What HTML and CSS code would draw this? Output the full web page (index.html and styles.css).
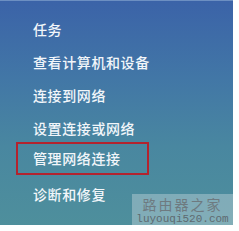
FILE: index.html
```html
<!DOCTYPE html>
<html lang="zh">
<head>
<meta charset="utf-8">
<link rel="stylesheet" href="styles.css">
</head>
<body>
<div class="panel">
  <ul class="tasks">
    <li class="title">任务</li>
    <li>查看计算机和设备</li>
    <li>连接到网络</li>
    <li>设置连接或网络</li>
    <li class="hl">管理网络连接</li>
    <li>诊断和修复</li>
  </ul>
  <div class="wm">
    <div class="wm-cn">路由器之家</div>
    <div class="wm-en">luyouqi520.com</div>
  </div>
</div>
</body>
</html>
```
FILE: styles.css
```css
html, body { margin: 0; padding: 0; background: #fff; }
.panel {
  position: relative;
  width: 233px;
  height: 225px;
  background: linear-gradient(to bottom, #3b63a8 0%, #4277a6 35%, #4987a0 65%, #4e8f9c 100%);
  border-top: 1px solid #6c8fc2;
  box-sizing: border-box;
  overflow: hidden;
}
.tasks {
  list-style: none;
  margin: 0;
  padding: 12px 0 0 33px;
  display: flex;
  flex-direction: column;
  align-items: flex-start;
}
.tasks li {
  height: 33px;
  line-height: 33px;
  font-family: "Noto Sans CJK SC", sans-serif;
  font-size: 14px;
  font-weight: 500;
  letter-spacing: 0.6px;
  color: #f2f6fa;
  white-space: nowrap;
}
.tasks li.hl {
  margin-left: -17px;
  padding-left: 15px;
  width: 133px;
  height: 33px;
  line-height: 29px;
  box-sizing: border-box;
  border: 2px solid #b3232e;
  margin-top: -3px;
  margin-bottom: 3px;
}
.wm {
  position: absolute;
  left: 132px;
  top: 193px;
  right: 0;
  bottom: 0;
  background: rgba(225, 232, 236, 0.35);
  display: flex;
  flex-direction: column;
  align-items: center;
  padding-top: 2px;
  box-sizing: border-box;
}
.wm-cn {
  font-family: "Noto Sans CJK SC", sans-serif;
  font-size: 14px;
  line-height: 17px;
  color: #6e7a80;
  letter-spacing: 2px;
}
.wm-en {
  font-family: "Liberation Mono", monospace;
  font-size: 11px;
  line-height: 12px;
  color: #5e6a70;
}
```
